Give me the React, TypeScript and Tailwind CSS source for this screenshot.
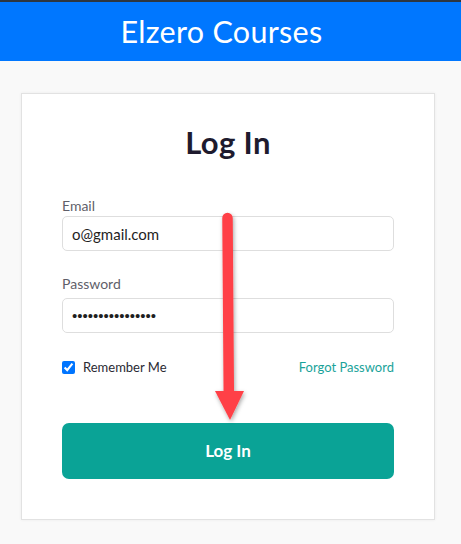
import React, { useState } from 'react';

const font = { fontFamily: 'Lato, "Open Sans", Arial, sans-serif' };

function Arrow() {
  return (
    <svg
      className="pointer-events-none absolute left-0 top-0"
      width="461"
      height="544"
      viewBox="0 0 461 544"
    >
      <defs>
        <filter id="arrowShadow" x="-50%" y="-10%" width="200%" height="120%">
          <feDropShadow dx="1" dy="2" stdDeviation="2" floodColor="#000" floodOpacity="0.35" />
        </filter>
      </defs>
      <g filter="url(#arrowShadow)" fill="#ff4146" stroke="#ff4146">
        <line x1="227.5" y1="218" x2="228.8" y2="393" strokeWidth="10.5" strokeLinecap="round" />
        <polygon points="215,391 244,391 230,420" strokeWidth="0" />
      </g>
    </svg>
  );
}

export default function App() {
  const [email, setEmail] = useState('o@gmail.com');
  const [password, setPassword] = useState('1234567890123456');
  const [remember, setRemember] = useState(true);

  return (
    <div className="relative h-[544px] w-[461px] overflow-hidden bg-[#f9f9f9]" style={font}>
      <header className="flex h-[61px] items-center justify-center border-t-2 border-[#2d3640] bg-[#0077ff] pr-[18px]">
        <h1 className="text-[30.5px] font-normal tracking-[0.3px] text-white">Elzero Courses</h1>
      </header>

      <div className="ml-[21px] mt-[32px] h-[427px] w-[414px] border border-[#e2e2e2] bg-white px-[40px] shadow-[0_0_3px_rgba(0,0,0,0.06)]">
        <h2 className="mt-[28px] text-center text-[31px] font-bold leading-[40px] tracking-[0.4px] text-[#1e1b2e]">
          Log In
        </h2>

        <form onSubmit={(e) => e.preventDefault()} className="mt-[34px]">
          <label className="block text-[14px] leading-[20px] text-[#5f5f6a]">Email</label>
          <input
            type="email"
            value={email}
            onChange={(e) => setEmail(e.target.value)}
            className="h-[35px] w-full rounded-[5px] border border-[#dedede] px-[9px] text-[15px] text-[#1f1f1f] outline-none"
          />

          <label className="mt-[23px] block text-[14px] leading-[20px] text-[#5f5f6a]">Password</label>
          <input
            type="password"
            value={password}
            onChange={(e) => setPassword(e.target.value)}
            className="mt-[4px] h-[35px] w-full rounded-[5px] border border-[#dedede] px-[9px] font-['Liberation_Sans',Arial,sans-serif] text-[15px] text-[#1f1f1f] outline-none"
          />

          <div className="mt-[25px] flex items-center justify-between">
            <label className="flex items-center gap-[8px] text-[13px] text-[#2a2a33]">
              <input
                type="checkbox"
                checked={remember}
                onChange={(e) => setRemember(e.target.checked)}
                className="h-[13px] w-[13px] accent-[#0075ff]"
              />
              Remember Me
            </label>
            <a href="#" className="text-[13px] text-[#1aa39a]">
              Forgot Password
            </a>
          </div>

          <button
            type="submit"
            className="mt-[45px] h-[56px] w-full rounded-[7px] bg-[#0aa396] text-[17px] font-bold text-white"
          >
            Log In
          </button>
        </form>
      </div>

      <Arrow />
    </div>
  );
}
